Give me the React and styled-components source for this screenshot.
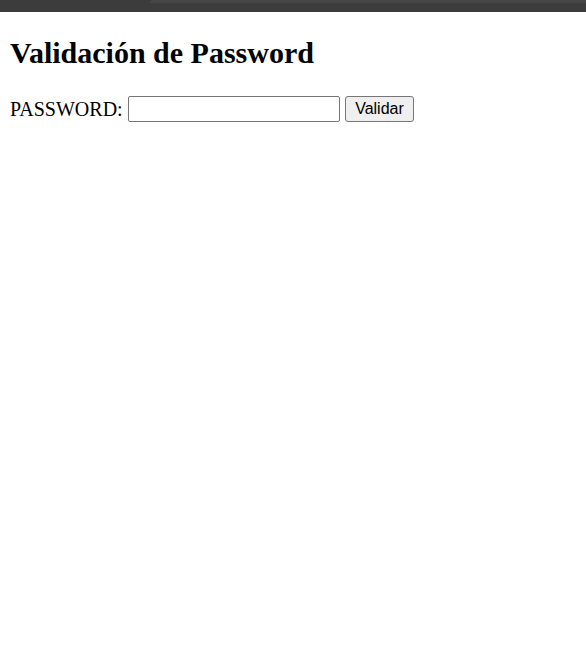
import React from 'react';
import styled, { createGlobalStyle } from 'styled-components';

const GlobalStyle = createGlobalStyle`
  html, body {
    margin: 0;
    background: #ffffff;
    font-family: "Liberation Serif", "Times New Roman", serif;
    font-size: 16px;
    color: #000000;
  }
`

let TopBar = styled.div`
  height: 12px;
  background: #3c3c3c;
  display: flex;
  align-items: flex-start;
`

let TabEdge = styled.div`
  flex: 1;
  margin-left: 150px;
  height: 3px;
  background: #474747;
  border-top-left-radius: 8px;
`

let Page = styled.div`
  padding: 0 10px;
  display: flow-root;
`

let Title = styled.h1`
  font-size: 30px;
  font-weight: bold;
  margin: 24px 0 26px;
  line-height: 34px;
`

let FormRow = styled.form`
  display: flex;
  align-items: center;
  gap: 5px;
`

let Label = styled.label`
  font-size: 20px;
`

let PasswordInput = styled.input`
  box-sizing: border-box;
  width: 212px;
  height: 26px;
  border: 1px solid #767676;
  border-radius: 2px;
  padding: 1px 2px;
  font-size: 16px;
  outline: none;
`

let Button = styled.button`
  box-sizing: border-box;
  height: 26px;
  padding: 1px 9.5px;
  background: #efefef;
  border: 1px solid #767676;
  border-radius: 3px;
  font-family: "Liberation Sans", Arial, sans-serif;
  font-size: 16px;
  color: #000000;
`

export default function App() {
  return (
    <>
      <GlobalStyle />
      <TopBar>
        <TabEdge />
      </TopBar>
      <Page>
        <Title>Validación de Password</Title>
        <FormRow onSubmit={e => e.preventDefault()}>
          <Label htmlFor="pwd">PASSWORD:</Label>
          <PasswordInput id="pwd" type="password" />
          <Button type="submit">Validar</Button>
        </FormRow>
      </Page>
    </>
  );
}
